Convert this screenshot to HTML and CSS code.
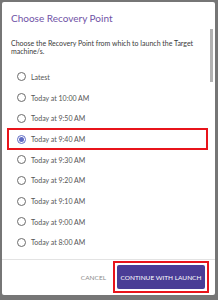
FILE: index.html
```html
<!DOCTYPE html>
<html lang="en">
<head>
  <meta charset="UTF-8" />
  <title>Choose Recovery Point</title>
  <link rel="stylesheet" href="styles.css">
</head>
<body>
  <div class="dialog">
    <div class="dialog-header">
      <h2 class="title">Choose Recovery Point</h2>
    </div>

    <div class="dialog-body">
      <p class="desc">Choose the Recovery Point from which to launch the Target machine/s.</p>
      <div class="points">
        <label class="point"><span class="radio"></span>Latest</label>
        <label class="point"><span class="radio"></span>Today at 10:00 AM</label>
        <label class="point"><span class="radio"></span>Today at 9:50 AM</label>
        <label class="point selected"><span class="radio"></span>Today at 9:40 AM</label>
        <label class="point"><span class="radio"></span>Today at 9:30 AM</label>
        <label class="point"><span class="radio"></span>Today at 9:20 AM</label>
        <label class="point"><span class="radio"></span>Today at 9:10 AM</label>
        <label class="point"><span class="radio"></span>Today at 9:00 AM</label>
        <label class="point"><span class="radio"></span>Today at 8:00 AM</label>
        <label class="point"><span class="radio"></span>Today at 7:00 AM</label>
      </div>
    </div>
    <div class="scroll-thumb"></div>

    <div class="dialog-footer">
      <button class="btn-cancel">CANCEL</button>
      <span class="highlight">
        <button class="btn-primary">CONTINUE WITH LAUNCH</button>
      </span>
    </div>
  </div>
</body>
</html>
```

FILE: styles.css
```css
* {
  box-sizing: border-box;
  margin: 0;
  padding: 0;
}
body {
  background: #767676;
  font-family: Lato, 'Open Sans', sans-serif;
  height: 300px;
  overflow: hidden;
}
.dialog {
  position: relative;
  margin: 2px 0 0 2px;
  width: 213px;
  height: 293px;
  background: #fff;
  border-radius: 2px;
  display: flex;
  flex-direction: column;
}
.dialog-header {
  height: 26px;
  padding: 10px 9px 0;
}
.title {
  font-size: 10px;
  line-height: 12px;
  font-weight: 400;
  color: #6f52a6;
}
.dialog-body {
  flex: 1;
  overflow: hidden;
  padding: 11px 0 0 0;
}
.scroll-thumb {
  position: absolute;
  top: 27px;
  left: 208px;
  width: 3px;
  height: 53px;
  background: #b3b3b3;
}
.desc {
  font-size: 7px;
  line-height: 8px;
  color: #3a3a3a;
  padding: 0 9px;
}
.points {
  margin-top: 11.6px;
  padding: 0 8px 0 6px;
}
.point {
  display: flex;
  align-items: center;
  height: 20.7px;
  padding-left: 9px;
  font-size: 7px;
  color: #555;
}
.point.selected {
  outline: 2px solid #e8141b;
  outline-offset: -1px;
}
.radio {
  width: 9px;
  height: 9px;
  border: 1px solid #6b6b6b;
  border-radius: 50%;
  margin-right: 5px;
  flex-shrink: 0;
  display: flex;
  align-items: center;
  justify-content: center;
}
.point.selected .radio {
  border-color: #5f6bc4;
}
.point.selected .radio::after {
  content: '';
  width: 5px;
  height: 5px;
  border-radius: 50%;
  background: #5f6bc4;
}
.dialog-footer {
  height: 36px;
  border-top: 1px solid #e3e3e3;
  display: flex;
  justify-content: flex-end;
  align-items: flex-start;
  gap: 7px;
  padding: 1px 6px 0;
}
.btn-cancel {
  background: none;
  border: none;
  color: #8a8a8a;
  font-family: inherit;
  font-size: 6.5px;
  height: 24px;
  margin-top: 4px;
}
.highlight {
  display: block;
  border: 2px solid #e8141b;
  padding: 2px;
}
.btn-primary {
  display: block;
  background: #4a3d96;
  color: #fff;
  border: none;
  border-radius: 2px;
  font-family: inherit;
  font-size: 6.5px;
  width: 88px;
  height: 24px;
}
```
